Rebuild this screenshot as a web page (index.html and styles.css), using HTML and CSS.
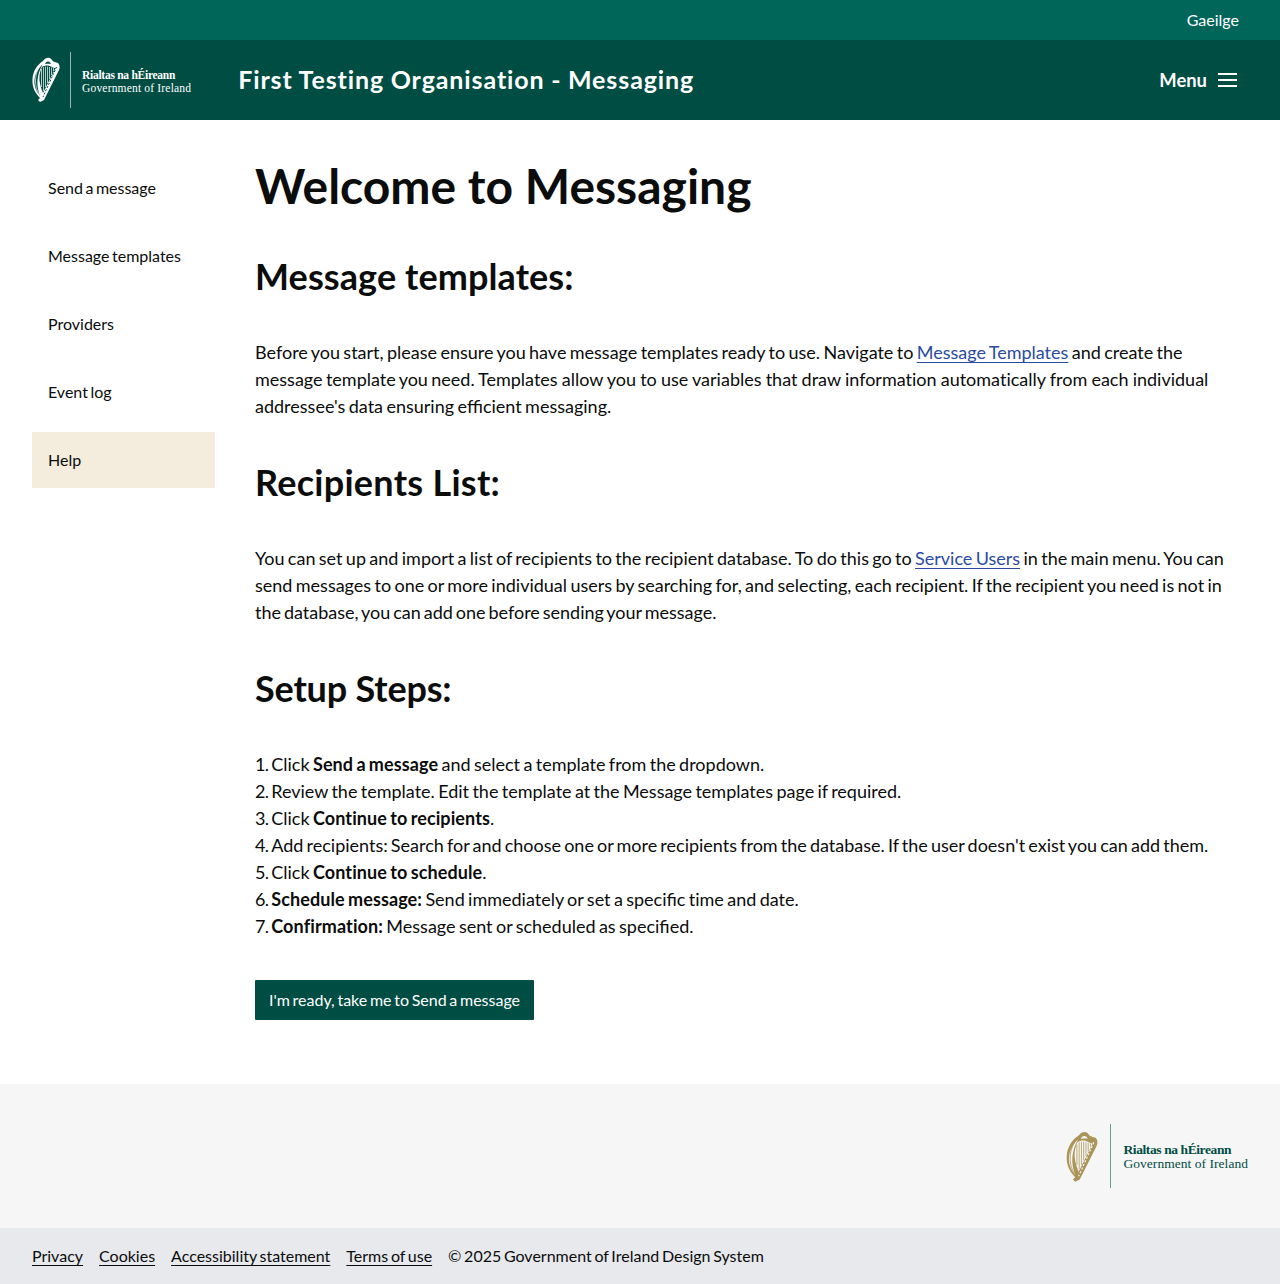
FILE: index.html
```html
<!DOCTYPE html>
<html lang="en">
<head>
<meta charset="utf-8">
<title>Welcome to Messaging</title>
<link rel="stylesheet" href="styles.css">
</head>
<body>
<svg class="defs" width="0" height="0" aria-hidden="true">
  <defs>
    <symbol id="harp" viewBox="0 0 28 46">
      <path class="harp-body" d="M11 4C14 0 18 0 20 3C21 5 24 5 26 6C28 8 28 11 27 13L12 43L8 45L6 43L8 41C3 36 0 30 0.500 22C1 14 5 8 11 4Z"/>
      <path class="harp-cut" d="M10.500 7.500C6 11.500 3 17 2.500 23C2 29 4 34 8 39C6 33.500 5 28 5.500 23C6 17 8 12 10.500 7.500Z"/>
      <path class="harp-line" d="M10.500 6.500C6 10.500 3.800 17 3.500 23C3.200 29 5 34 7.500 38"/>
      <path class="harp-cut" d="M10 10C13 8 16 8 19 9.500C21 10.500 22 11 23.500 11L11 36C8.500 30 7 24 7.500 19C8 15 9 12 10 10Z"/>
      <path class="harp-line" d="M9.500 12V30M11.500 10V34M13.500 9.500V30M15.500 9.500V26M17.500 10V22M19.500 10.500V18M21.500 11V14"/>
      <path class="harp-dash" d="M24.500 10L11 40"/>
      <path class="harp-cut" d="M16 4.500C17.500 4.500 18.500 5.500 19 7C17.500 6.500 15 6.500 13 7C13.500 5.500 14.500 4.500 16 4.500Z"/>
    </symbol>
  </defs>
</svg>
<div class="topbar"><a class="topbar-link" href="#">Gaeilge</a></div>
<header class="header">
  <a class="logo" href="#">
    <svg class="harp-small"><use href="#harp"/></svg>
    <span class="logo-rule"></span>
    <span class="logo-text"><b>Rialtas na hÉireann</b><span>Government of Ireland</span></span>
  </a>
  <a class="site-title" href="#">First Testing Organisation - Messaging</a>
  <button class="menu-btn" type="button">Menu
    <svg class="menu-icon" viewBox="0 0 19 14"><path d="M0 1h19M0 7h19M0 13h19" stroke="currentColor" stroke-width="2"/></svg>
  </button>
</header>
<div class="layout">
  <nav class="side">
    <a href="#">Send a message</a>
    <a href="#">Message templates</a>
    <a href="#">Providers</a>
    <a href="#">Event log</a>
    <a class="current" href="#">Help</a>
  </nav>
  <main class="content">
    <h1>Welcome to Messaging</h1>
    <h2 class="h2-a">Message templates:</h2>
    <p>Before you start, please ensure you have message templates ready to use. Navigate to <a href="#">Message Templates</a> and create the message template you need. <span class="loose">Templates allow you to use variables that draw information automatically from each individual</span> addressee's data ensuring e<span class="lig">ffi</span>cient messaging.</p>
    <h2 class="h2-b">Recipients List:</h2>
    <p>You can set up and import a list of recipients to the recipient database. To do this go to <a href="#">Service Users</a> in the main menu. You can send messages to one or more individual users by searching for, and selecting, each recipient. If the recipient you need is not in <span class="snug">the database, you can add one before sending your message.</span></p>
    <h2 class="h2-c">Setup Steps:</h2>
    <ol class="steps">
      <li><span class="num">1. </span>Click <b>Send a message</b> and select a template from the dropdown.</li>
      <li><span class="num">2. </span>Review the template. Edit the template at the Message templates page if required.</li>
      <li><span class="num">3. </span>Click <b>Continue to recipients</b>.</li>
      <li><span class="num">4. </span><span class="snug-slight">Add recipients: Search for and choose one or more recipients from the database. If the user doesn't exist you can add them.</span></li>
      <li><span class="num">5. </span>Click <b>Continue to schedule</b>.</li>
      <li><span class="num">6. </span><b>Schedule message:</b> Send immediately or set a speci<span class="lig">fi</span>c time and date.</li>
      <li><span class="num">7. </span><b>Con<span class="lig">fi</span>rmation:</b> Message sent or scheduled as speci<span class="lig">fi</span>ed.</li>
    </ol>
    <a class="cta" href="#">I'm ready, take me to Send a message</a>
  </main>
</div>
<footer>
  <div class="footer-logo-band">
    <a class="logo logo-footer" href="#">
      <svg class="harp-large"><use href="#harp"/></svg>
      <span class="logo-rule"></span>
      <span class="logo-text"><b>Rialtas na hÉireann</b><span>Government of Ireland</span></span>
    </a>
  </div>
  <div class="footer-links">
    <a href="#">Privacy</a>
    <a href="#">Cookies</a>
    <a href="#">Accessibility statement</a>
    <a href="#">Terms of use</a>
    <span>© 2025 Government of Ireland Design System</span>
  </div>
</footer>
</body>
</html>
```
FILE: styles.css
```css
* { box-sizing: border-box; }
html, body { margin: 0; padding: 0; }
body { font-family: Lato, sans-serif; color: #0b0c0c; background: #fff; font-size: 18px; line-height: 27px; word-spacing: -1.25px; font-variant-ligatures: none; }
.lig { font-variant-ligatures: normal; }
.loose { word-spacing: -.45px; }
.snug { word-spacing: -1.7px; }
.snug-slight { word-spacing: -1.48px; }
.defs { position: absolute; }
a { color: inherit; }

.harp-body { fill: currentColor; }
.harp-cut { fill: var(--harp-bg); }
.harp-line { fill: none; stroke: currentColor; stroke-width: .7; }
.harp-dash { fill: none; stroke: var(--harp-bg); stroke-width: 1; stroke-dasharray: 2 1.500; }

.topbar { height: 40px; background: #00665a; display: flex; justify-content: flex-end; align-items: center; padding: 0 41px 2px 0; }
.topbar-link { color: #fff; font-size: 16px; text-decoration: none; }

.header { height: 80px; background: #004d44; color: #fff; display: flex; align-items: center; padding: 0 43px 0 32px; --harp-bg: #004d44; }
.logo { display: flex; align-items: center; text-decoration: none; color: #fff; }
.harp-small { width: 28px; height: 46px; color: #fff; }
.logo-rule { display: block; width: 1px; height: 56px; background: rgba(255,255,255,.6); margin: 0 11px 0 10px; }
.logo-text { display: flex; flex-direction: column; font-family: "Liberation Serif", serif; font-size: 11.500px; line-height: 12.500px; white-space: nowrap; word-spacing: 0; padding-top: 3px; letter-spacing: .18px; }
.logo-text b { font-weight: 700; letter-spacing: -.27px; }
.site-title { margin: 0 0 2px 47px; font-size: 25px; font-weight: 700; letter-spacing: .9px; word-spacing: -.4px; color: #fff; text-decoration: none; white-space: nowrap; }
.menu-btn { margin-left: auto; display: flex; align-items: center; gap: 11px; background: none; border: 0; padding: 0; color: #fff; font: 700 18.400px/24px Lato, sans-serif; }
.menu-icon { width: 19px; height: 14px; display: block; }

.layout { display: flex; padding: 40px 32px 64px; gap: 40px; }
.side { width: 183px; flex: none; display: flex; flex-direction: column; gap: 12px; }
.side a { display: flex; align-items: center; height: 56px; padding: 0 16px 2px; font-size: 16px; word-spacing: -1.600px; text-decoration: none; color: #0b0c0c; }
.side a.current { background: #f4ecdc; }

.content { flex: 1; min-width: 0; }
h1 { margin: -2px 0 40px; font-size: 48px; line-height: 56px; font-weight: 700; word-spacing: 0; }
h2 { margin: 0 0 41px; font-size: 36px; line-height: 44px; font-weight: 700; word-spacing: 0; }
.h2-a { letter-spacing: .1px; }
.h2-b { letter-spacing: .27px; }
.h2-c { letter-spacing: -.18px; }
.content p { margin: 0 0 40px; }
.content p a { color: #2a4ba0; text-underline-offset: 3px; }
.steps { list-style: none; margin: 0 0 40px; padding: 0; }
.steps b { letter-spacing: .1px; }
.num { letter-spacing: -.6px; }
.cta { display: inline-block; height: 40px; line-height: 40px; padding: 0 14px; background: #004d44; color: #fff; font-size: 16px; word-spacing: -1.400px; text-decoration: none; border-radius: 1px; }

.footer-logo-band { height: 144px; background: #f6f6f6; display: flex; justify-content: flex-end; align-items: center; padding-right: 32px; --harp-bg: #f6f6f6; }
.logo-footer { color: #004d44; }
.harp-large { width: 32px; height: 52px; color: #ab9458; margin-top: 1px; }
.logo-footer .logo-rule { height: 64px; background: #6a9c95; margin: 0 12px; }
.logo-footer .logo-text { font-size: 13.500px; line-height: 14px; letter-spacing: .04px; padding-top: 2px; }
.logo-footer .logo-text b { letter-spacing: -.4px; }
.footer-links { height: 56px; background: #e8e9ec; display: flex; align-items: center; gap: 16px; padding: 0 32px 2px; font-size: 16px; word-spacing: -1.400px; text-underline-offset: 3px; }
```
